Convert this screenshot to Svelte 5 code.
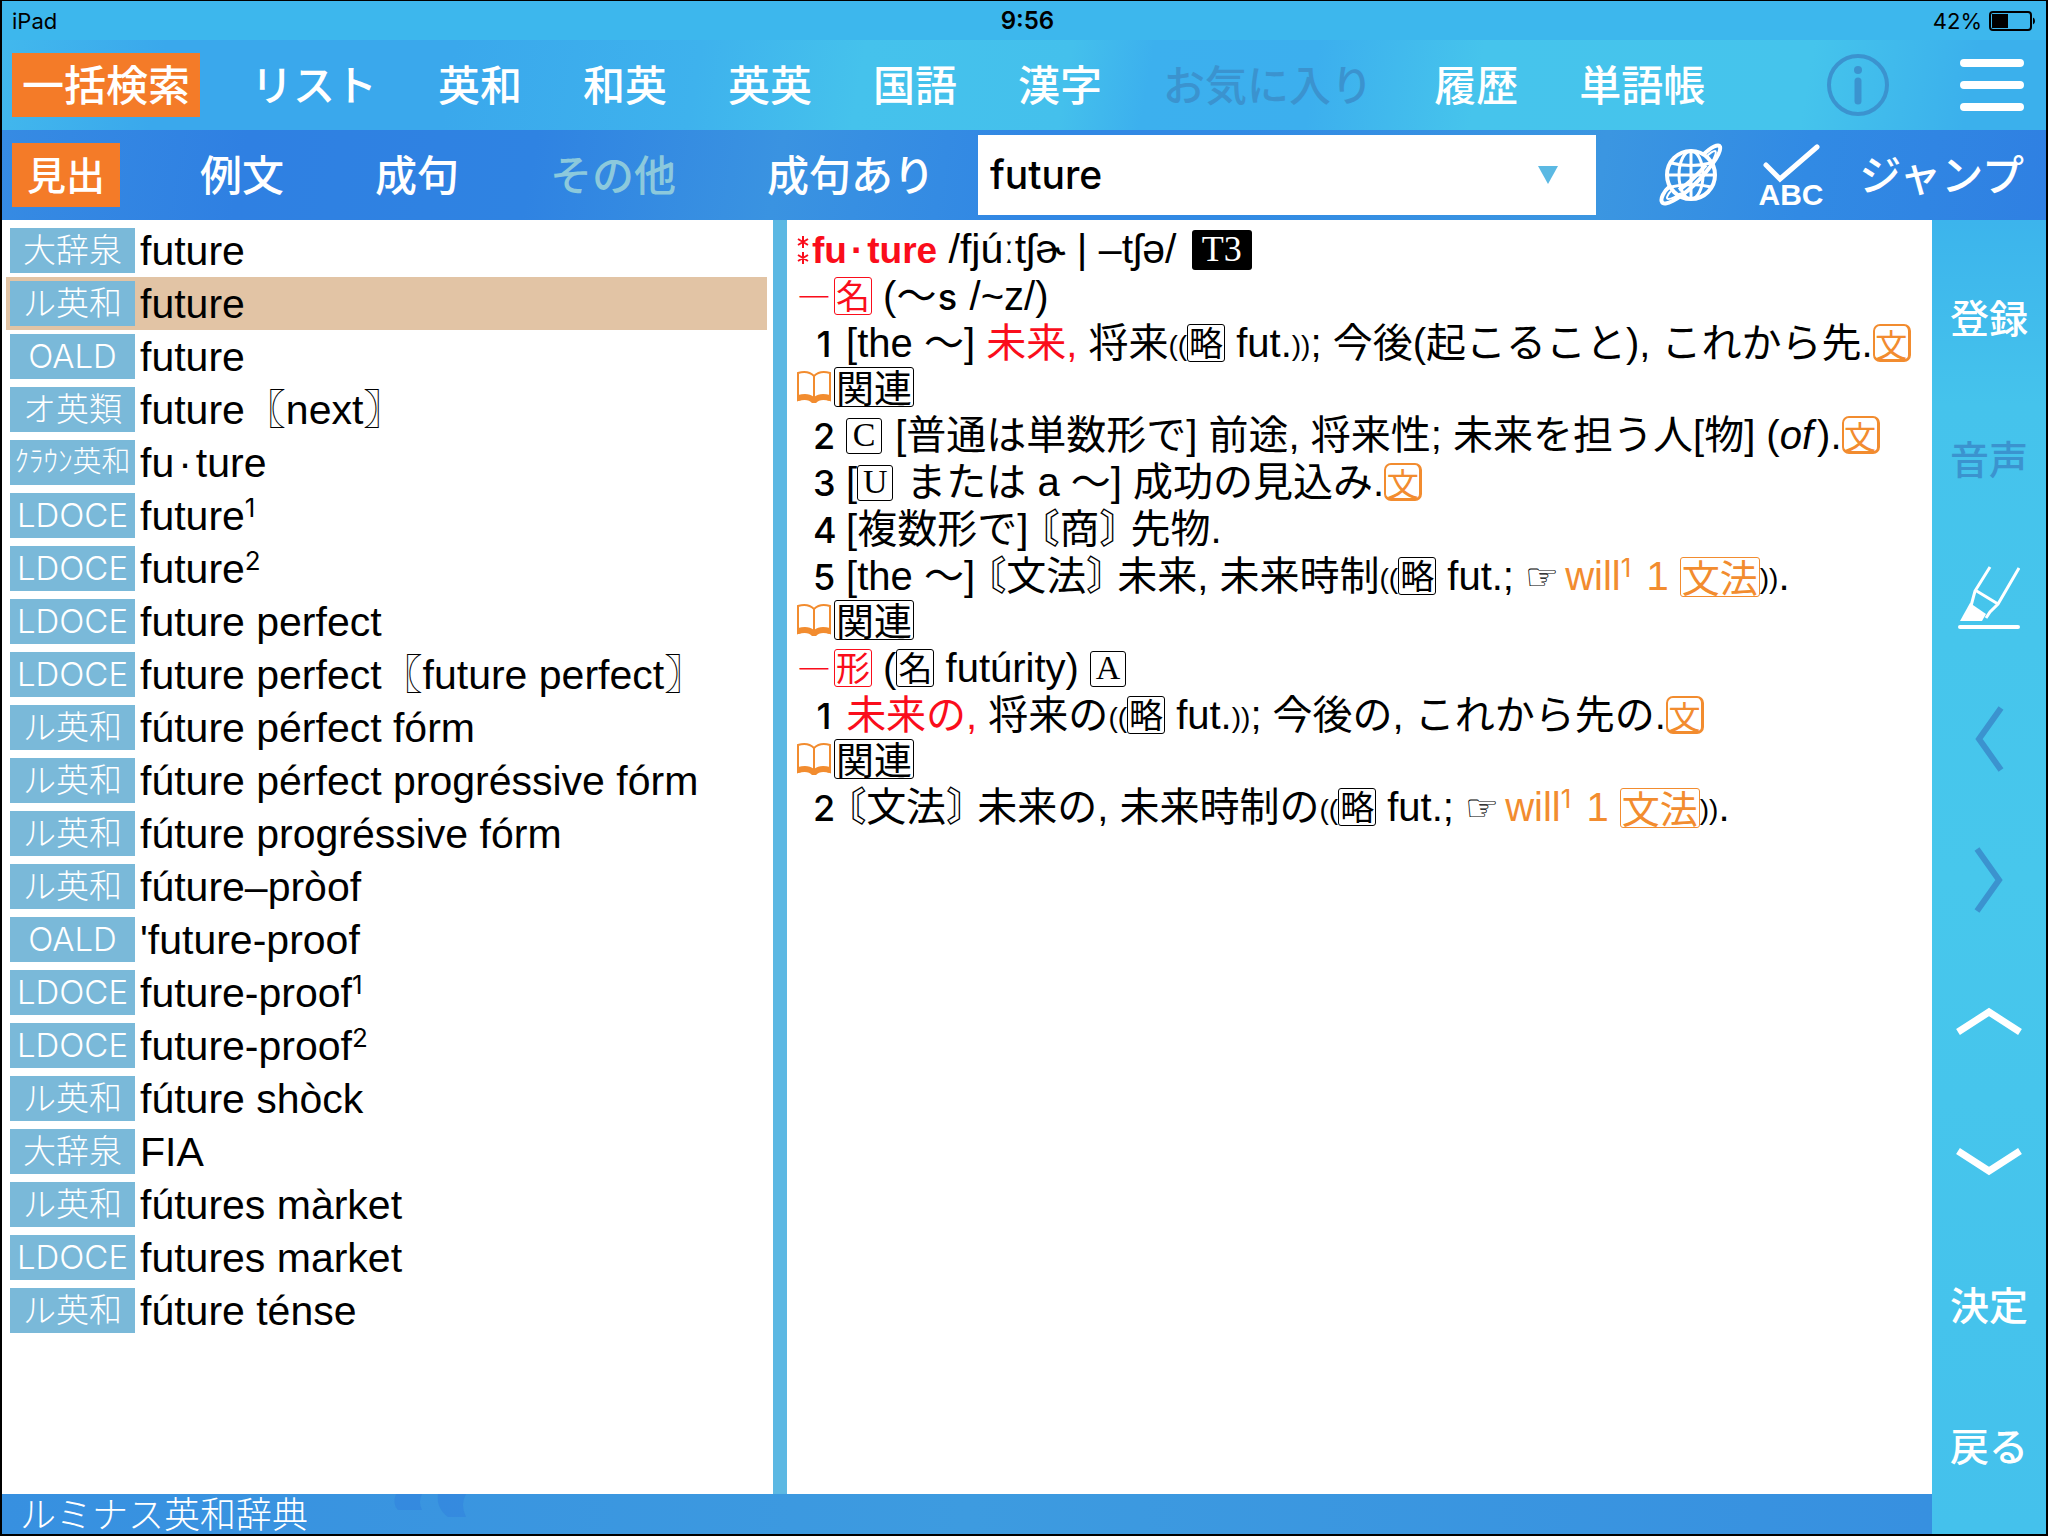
<script lang="ts">
    type Entry = {
        dict: string;
        word: string;
        sup?: string;
        small?: boolean;
    };

    const tabs = [
        { label: '一括検索', active: true },
        { label: 'リスト' },
        { label: '英和' },
        { label: '和英' },
        { label: '英英' },
        { label: '国語' },
        { label: '漢字' },
        { label: 'お気に入り', disabled: true },
        { label: '履歴' },
        { label: '単語帳' }
    ];

    const modes = [
        { label: '見出', active: true },
        { label: '例文' },
        { label: '成句' },
        { label: 'その他', disabled: true },
        { label: '成句あり' }
    ];

    const entries: Entry[] = [
        { dict: '大辞泉', word: 'future' },
        { dict: 'ル英和', word: 'future' },
        { dict: 'OALD', word: 'future' },
        { dict: 'オ英類', word: 'future〖next〗' },
        { dict: 'ｸﾗｳﾝ英和', word: 'fu·ture', small: true },
        { dict: 'LDOCE', word: 'future', sup: '1' },
        { dict: 'LDOCE', word: 'future', sup: '2' },
        { dict: 'LDOCE', word: 'future perfect' },
        { dict: 'LDOCE', word: 'future perfect〖future perfect〗' },
        { dict: 'ル英和', word: 'fúture pérfect fórm' },
        { dict: 'ル英和', word: 'fúture pérfect progréssive fórm' },
        { dict: 'ル英和', word: 'fúture progréssive fórm' },
        { dict: 'ル英和', word: 'fúture–pròof' },
        { dict: 'OALD', word: "'future-proof" },
        { dict: 'LDOCE', word: 'future-proof', sup: '1' },
        { dict: 'LDOCE', word: 'future-proof', sup: '2' },
        { dict: 'ル英和', word: 'fúture shòck' },
        { dict: '大辞泉', word: 'FIA' },
        { dict: 'ル英和', word: 'fútures màrket' },
        { dict: 'LDOCE', word: 'futures market' },
        { dict: 'ル英和', word: 'fúture ténse' }
    ];

    let query = $state('future');
    let selected = $state(1);
</script>

{#snippet headword(word: string)}{#each word.split('·') as part, i}{#if i > 0}<span class="dot">·</span>{/if}{part}{/each}{/snippet}

{#snippet related()}
    <p class="related">
        <a href="#related"
            ><svg class="book" viewBox="0 0 34 34" aria-hidden="true">
                <path d="M1 3Q11 0 17 6Q23 0 33 3V30Q23 26 17 31Q11 26 1 30Z" fill="none" stroke="currentColor" stroke-width="2" />
                <path d="M17 6V28" stroke="currentColor" stroke-width="2" />
                <path d="M1 25Q11 22 17 27Q23 22 33 25V31Q23 28 19 33H15Q11 28 1 31Z" fill="currentColor" />
            </svg><span class="box wide">関連</span></a>
    </p>
{/snippet}

{#snippet example()}<button class="example">文</button>{/snippet}

{#snippet abbr()}<span class="paren">((</span><span class="box">略</span>{/snippet}

{#snippet grammar()}<span class="kakko">〘</span>文法<span class="kakko">〙</span>{/snippet}

{#snippet seeWill()}<span class="hand">☞</span><a href="#will">will<sup>1</sup> 1 <span class="box wide">文法</span></a><span class="paren">))</span>.{/snippet}

<div class="app" lang="ja">
    <header class="status">
        <span>iPad</span>
        <span class="time">9:56</span>
        <span class="battery">
            42%
            <svg width="46" height="20" viewBox="0 0 46 20" aria-hidden="true">
                <rect x="1" y="1" width="41" height="18" rx="3" fill="none" stroke="#000" stroke-width="2" />
                <rect x="3" y="3" width="16" height="14" fill="#000" />
                <path d="M44 6.500Q46 7 46 10Q46 13 44 13.500Z" fill="#000" />
            </svg>
        </span>
    </header>

    <nav class="tabs">
        {#each tabs as tab}
            <button class:active={tab.active} disabled={tab.disabled}>{tab.label}</button>
        {/each}
        <div class="tools">
            <button disabled aria-label="情報">
                <svg width="62" height="62" viewBox="0 0 62 62">
                    <circle cx="31" cy="31" r="29" fill="none" stroke="currentColor" stroke-width="4" />
                    <circle cx="31" cy="16" r="4" fill="currentColor" />
                    <path d="M31 27V47" stroke="currentColor" stroke-width="7" stroke-linecap="round" />
                </svg>
            </button>
            <button aria-label="メニュー">
                <svg width="64" height="54" viewBox="0 0 64 54">
                    <path d="M4 5H60M4 27H60M4 49H60" stroke="#fff" stroke-width="8" stroke-linecap="round" />
                </svg>
            </button>
        </div>
    </nav>

    <nav class="modes">
        <div class="mode-list">
            {#each modes as mode}
                <button class:active={mode.active} disabled={mode.disabled}>{mode.label}</button>
            {/each}
        </div>
        <div class="search">
            <input type="text" aria-label="検索語" bind:value={query} />
            <button aria-label="検索履歴">
                <svg width="20" height="18" viewBox="0 0 20 18">
                    <path d="M0 0H20L10 18Z" fill="#5bb9e3" />
                </svg>
            </button>
        </div>
        <div class="tools">
            <button aria-label="ネット検索">
                <svg width="64" height="64" viewBox="0 0 64 64" fill="none" stroke="#fff" stroke-width="4">
                    <circle cx="32" cy="32" r="24" />
                    <ellipse cx="32" cy="32" rx="12" ry="24" stroke-width="3" />
                    <path d="M32 8V56M8 32H56M12 20Q32 25 52 20M12 44Q32 39 52 44" stroke-width="3" />
                    <path d="M44 12C52 4 60 0 61 4C63 10 48 30 34 43C20 56 5 64 3 59C1 56 5 48 10 44" />
                    <path d="M52 20C56 15 58 8 56 8C54 8 50 11 47 14M12 48C8 52 7 56 9 56C12 56 18 53 22 50" stroke-width="2" />
                    <path d="M47 22Q33 38 20 47" />
                </svg>
            </button>
            <button aria-label="スペルチェック">
                <svg class="spell" width="64" height="64" viewBox="0 0 64 64">
                    <path d="M7 22L21 36L58 4" fill="none" stroke="#fff" stroke-width="5" stroke-linecap="round" />
                    <text x="32" y="62" text-anchor="middle" class="abc">ABC</text>
                </svg>
            </button>
            <button class="jump">ジャンプ</button>
        </div>
    </nav>

    <div class="content">
        <div class="panes">
            <ul class="results">
                {#each entries as entry, i}
                    <li>
                        <button class:selected={selected === i} onclick={() => (selected = i)}>
                            <span class="dict" class:small={entry.small}>{entry.dict}</span>
                            <span class="word">{@render headword(entry.word)}{#if entry.sup}<sup>{entry.sup}</sup>{/if}</span>
                        </button>
                    </li>
                {/each}
            </ul>

            <article>
                <h1>
                    <svg class="stars" width="15" height="32" viewBox="0 0 15 32" aria-hidden="true">
                        <path d="M6 2V14M1 5L11 11M11 5L1 11M6 18V30M1 21L11 27M11 21L1 27" stroke="#fa0d1b" stroke-width="2" />
                    </svg><b>{@render headword('fu·ture')}</b> /fjúːtʃɚ | –tʃə/ <span class="level">T3</span>
                </h1>
                <p><span class="red"><span class="dash">―</span><span class="box">名</span></span> (〜<span class="num">s</span> /~z/)</p>
                <p class="sense">
                    <span class="num">1</span> [the 〜] <span class="red">未来,</span> 将来{@render abbr()} fut.<span class="paren">))</span>; 今後(起こること), これから先.{@render example()}
                </p>
                {@render related()}
                <p class="sense">
                    <span class="num">2</span> <span class="letter">C</span> [普通は単数形で] 前途, 将来性; 未来を担う人[物] (<em>of</em>).{@render example()}
                </p>
                <p class="sense">
                    <span class="num">3</span> [<span class="letter">U</span> または a 〜] 成功の見込み.{@render example()}
                </p>
                <p class="sense">
                    <span class="num">4</span> [複数形で] <span class="kakko">〘</span>商<span class="kakko">〙</span> 先物.
                </p>
                <p class="sense">
                    <span class="num">5</span> [the 〜] {@render grammar()} 未来, 未来時制{@render abbr()} fut.; {@render seeWill()}
                </p>
                {@render related()}
                <p>
                    <span class="red"><span class="dash">―</span><span class="box">形</span></span> (<span class="box">名</span> futúrity) <span class="letter">A</span>
                </p>
                <p class="sense">
                    <span class="num">1</span> <span class="red">未来の,</span> 将来の{@render abbr()} fut.<span class="paren">))</span>; 今後の, これから先の.{@render example()}
                </p>
                {@render related()}
                <p class="sense">
                    <span class="num">2</span> {@render grammar()} 未来の, 未来時制の{@render abbr()} fut.; {@render seeWill()}
                </p>
            </article>

            <footer>
                <span>ルミナス英和辞典</span>
                <svg width="76" height="24" viewBox="0 0 76 24" aria-hidden="true">
                    <path d="M4 0H30Q26 8 30 16H6Q0 10 4 0Z" fill="#2f80de" opacity="0.5" />
                    <path d="M46 0H74Q68 10 74 23H56Q44 14 46 0Z" fill="#2f80de" opacity="0.5" />
                </svg>
            </footer>
        </div>

        <aside>
            <button>登録</button>
            <button disabled>音声</button>
            <button aria-label="マーカー">
                <svg width="62" height="64" viewBox="0 0 62 64">
                    <path d="M32 1L17 25L13 40M17 24L40 38M61 2L40 38L32 46L28 52" fill="none" stroke="#fff" stroke-width="3" />
                    <path d="M12 37L28 48L24 55H2Z" fill="#fff" />
                    <path d="M2 61H60" stroke="#fff" stroke-width="4" stroke-linecap="round" />
                </svg>
            </button>
            <button disabled aria-label="前へ">
                <svg width="32" height="66" viewBox="0 0 32 66">
                    <path d="M28 2L6 33L28 64" fill="none" stroke="currentColor" stroke-width="6" />
                </svg>
            </button>
            <button disabled aria-label="次へ">
                <svg width="32" height="66" viewBox="0 0 32 66">
                    <path d="M4 2L26 33L4 64" fill="none" stroke="currentColor" stroke-width="6" />
                </svg>
            </button>
            <button aria-label="上へ">
                <svg width="66" height="28" viewBox="0 0 66 28">
                    <path d="M2 25L33 5L64 25" fill="none" stroke="#fff" stroke-width="7" />
                </svg>
            </button>
            <button aria-label="下へ">
                <svg width="66" height="28" viewBox="0 0 66 28">
                    <path d="M2 3L33 23L64 3" fill="none" stroke="#fff" stroke-width="7" />
                </svg>
            </button>
            <button>決定</button>
            <button>戻る</button>
        </aside>
    </div>
</div>

<style>
    :global(body) {
        background: #fff;
    }

    .app {
        box-sizing: border-box;
        min-height: 100vh;
        display: flex;
        flex-direction: column;
        border: solid #000;
        border-width: 1px 2px 2px;
        font-family: "Liberation Sans", "Noto Sans CJK JP", sans-serif;
        color: #000;
    }

    button {
        border: none;
        background: none;
        padding: 0;
        margin: 0;
        font: inherit;
        color: inherit;
        cursor: pointer;
    }

    svg {
        display: block;
    }

    sup {
        font: 26px/1 Inter, sans-serif;
        vertical-align: 13px;
    }

    .dot {
        padding: 0 4px;
    }

    .status {
        display: grid;
        grid-template-columns: 1fr auto 1fr;
        align-items: center;
        height: 39px;
        padding: 0 11px 0 10px;
        background: #3db7ed;
        font: 22px Inter, sans-serif;
    }

    .time {
        padding-left: 8px;
        font-weight: 600;
        font-size: 24px;
    }

    .battery {
        display: flex;
        align-items: center;
        justify-content: flex-end;
        gap: 7px;
    }

    .tabs,
    .modes,
    aside {
        font-family: "Noto Sans CJK JP", sans-serif;
        font-weight: 500;
        color: #fff;
    }

    .tabs,
    .modes {
        display: flex;
        align-items: center;
        height: 90px;
        padding: 0 22px 0 10px;
        font-size: 42px;
        line-height: 60px;
        white-space: nowrap;
    }

    .tabs {
        gap: 41px;
        background: linear-gradient(100deg, #42b8ed 0%, #3aa8ec 8%, #3aa8ec 22%, #3eb2ed 34%, #45c2ec 42%, #44c0ec 52%, #3cb0ee 56%, #3cafee 64%, #46c4ec 72%, #45c4ec 88%, #3bb0ec 96%);
    }

    .tabs > button {
        padding: 0 10px 4px;
    }

    .modes {
        background: linear-gradient(100deg, #368be3 0%, #2f80e2 12%, #2f83e2 26%, #3a93e1 38%, #3187e4 50%, #318ae4 60%, #3b96e1 78%, #318ae4 88%, #2f80e2 100%);
    }

    .mode-list {
        display: flex;
        flex: none;
        gap: 91px;
        width: 966px;
    }

    .mode-list button,
    .jump {
        padding-bottom: 4px;
    }

    .mode-list .active {
        padding: 0 15px 4px;
        margin-right: -11px;
        font-size: 39px;
    }

    .active {
        background: #f47b28;
    }

    button:disabled {
        color: #3b93cf;
        cursor: default;
    }

    .modes button:disabled {
        color: #8cc9dc;
    }

    .tools {
        display: flex;
        align-items: center;
        margin-left: auto;
    }

    .tabs .tools {
        gap: 71px;
    }

    .modes .tools {
        gap: 36px;
    }

    .spell {
        overflow: visible;
    }

    .abc {
        font: bold 30px "Liberation Sans", sans-serif;
        fill: #fff;
    }

    .search {
        display: flex;
        flex: 0 1 618px;
        height: 80px;
        background: #fff;
    }

    .search input {
        flex: 1;
        width: 0;
        border: none;
        outline: none;
        padding: 0 12px 2px;
        background: none;
        font: 500 39px Inter, sans-serif;
        color: #000;
    }

    .search button {
        padding: 0 38px;
    }

    .content {
        flex: 1;
        display: grid;
        grid-template-columns: 1fr 114px;
    }

    .panes {
        display: grid;
        grid-template-columns: 771px 1fr;
        grid-template-rows: 1fr 40px;
    }

    .results {
        list-style: none;
        margin: 0;
        padding: 4px 6px 0 4px;
    }

    .results button {
        display: flex;
        align-items: center;
        gap: 5px;
        width: 100%;
        height: 53px;
        padding: 0 4px;
        font-size: 41px;
        line-height: 51px;
        text-align: left;
        white-space: nowrap;
    }

    .results .selected {
        background: #e2c4a5;
    }

    .dict {
        width: 125px;
        height: 45px;
        background: #7ab9d9;
        color: #fff;
        font: 300 33px/44px Inter, "Noto Sans CJK JP", sans-serif;
        text-align: center;
    }

    .small {
        font-size: 29px;
    }

    .word {
        padding-top: 2px;
    }

    article {
        padding: 6px 10px;
        border-left: 14px solid #5cb8e3;
    }

    h1,
    p {
        height: 47px;
        margin: 0;
        font-size: 40px;
        font-weight: 400;
        line-height: 47px;
        white-space: nowrap;
    }

    h1 {
        font-size: 41px;
    }

    h1 b {
        font-size: 37px;
    }

    .related {
        height: 45px;
        line-height: 45px;
    }

    .sense {
        padding-left: 16px;
    }

    h1 b,
    .red {
        color: #fa0d1b;
    }

    .stars {
        display: inline-block;
        margin-top: 8px;
        vertical-align: top;
    }

    .dash {
        margin-right: 3px;
        font: 700 34px/1 "Noto Sans CJK JP", sans-serif;
    }

    .num {
        display: inline-block;
        width: 22px;
        font: 500 36px/1 Inter, sans-serif;
        text-align: center;
    }

    .level,
    .box,
    .letter,
    .example {
        display: inline-block;
        box-sizing: border-box;
        margin-top: 4px;
        text-align: center;
        vertical-align: top;
    }

    .level {
        width: 60px;
        height: 40px;
        margin-left: 4px;
        border-radius: 3px;
        background: #000;
        color: #fff;
        font: 36px/38px "Liberation Serif", serif;
    }

    .box {
        width: 38px;
        height: 38px;
        border: 1px solid;
        border-radius: 3px;
        font: 34px/33px "Noto Sans CJK JP", sans-serif;
    }

    .wide {
        width: 80px;
        height: 40px;
        font-size: 38px;
        line-height: 36px;
    }

    .letter {
        width: 36px;
        height: 36px;
        margin-top: 6px;
        margin-right: 2px;
        border: 1px solid;
        border-radius: 3px;
        font: 34px/32px "Liberation Serif", serif;
    }

    .example {
        width: 38px;
        height: 38px;
        border: solid;
        border-width: 2px 3px 3px 2px;
        border-radius: 7px;
        color: #f28c2f;
        font: 32px/30px "Noto Sans CJK JP", sans-serif;
    }

    .paren {
        font: 28px/1 "Liberation Sans", sans-serif;
        vertical-align: 2px;
    }

    .kakko {
        font-family: "Noto Sans CJK JP", sans-serif;
        font-feature-settings: "halt";
        line-height: 1;
    }

    em {
        margin-right: 4px;
    }

    a {
        color: #f28c2f;
        text-decoration: none;
    }

    a sup {
        margin-right: 4px;
    }

    .related a {
        display: flex;
        align-items: center;
        gap: 3px;
    }

    .related .box {
        margin-top: 0;
        color: #000;
    }

    .book {
        width: 34px;
        height: 34px;
    }

    .hand {
        margin-right: 6px;
        font: 38px/1 "DejaVu Sans", sans-serif;
    }

    footer {
        grid-column: 1 / -1;
        display: flex;
        gap: 84px;
        padding-left: 18px;
        background: linear-gradient(90deg, #3790e0, #3d9be0 50%, #3790e0);
        color: #fff;
        font: 300 36px/36px "Noto Sans CJK JP", sans-serif;
    }

    aside {
        display: grid;
        grid-template-rows: repeat(9, 1fr);
        padding: 26px 0 20px;
        background: linear-gradient(180deg, #3cb4ec 0%, #45c3ec 14%, #47c7ec 50%, #44c1ec 100%);
        font-size: 39px;
        line-height: 56px;
    }

    aside button {
        display: grid;
        place-items: center;
    }
</style>
